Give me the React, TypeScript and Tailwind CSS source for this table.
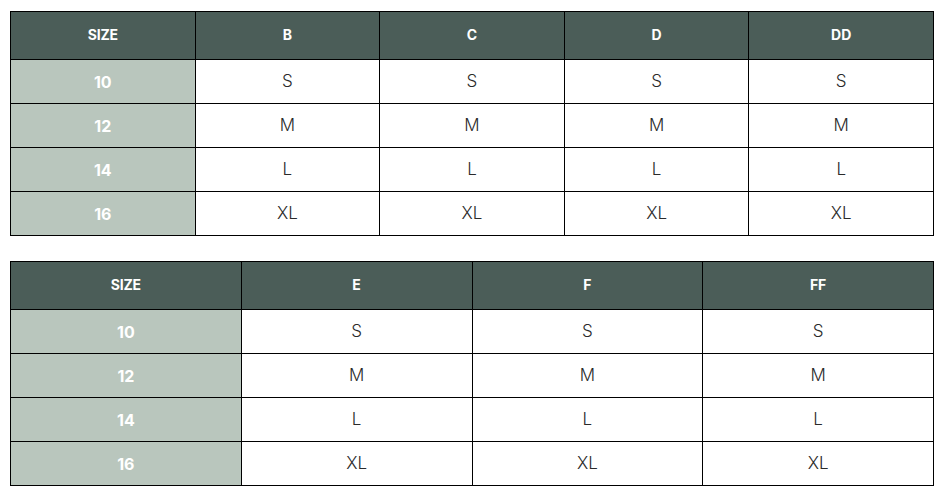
const first = {
  cols: ["B", "C", "D", "DD"],
}
const second = {
  cols: ["E", "F", "FF"],
}
const rows = [
  { size: "10", fit: "S" },
  { size: "12", fit: "M" },
  { size: "14", fit: "L" },
  { size: "16", fit: "XL" },
]

function SizeTable({ cols }: { cols: string[] }) {
  return (
    <table className="w-[924px] table-fixed border-collapse border border-black">
      <thead>
        <tr className="h-[48px] bg-[#4b5d58]">
          <th className="border border-black pb-[3px] text-[14px] font-bold tracking-[-0.2px] text-white">SIZE</th>
          {cols.map((c) => (
            <th key={c} className="border border-black pb-[3px] text-[14px] font-bold text-white">
              {c}
            </th>
          ))}
        </tr>
      </thead>
      <tbody>
        {rows.map((r) => (
          <tr key={r.size} className="h-[44px]">
            <td className="border border-black bg-[#b9c6bd] text-center text-[16px] font-bold text-white">
              {r.size}
            </td>
            {cols.map((c) => (
              <td key={c} className="border border-black bg-white text-center text-[17px] font-light text-[#2a2a2a]">
                {r.fit}
              </td>
            ))}
          </tr>
        ))}
      </tbody>
    </table>
  )
}

export default function App() {
  return (
    <main className="min-h-screen bg-white pl-[10px] pt-[11px] font-['Inter',sans-serif]">
      <div className="flex flex-col gap-[25px]">
        <SizeTable cols={first.cols} />
        <SizeTable cols={second.cols} />
      </div>
    </main>
  )
}
